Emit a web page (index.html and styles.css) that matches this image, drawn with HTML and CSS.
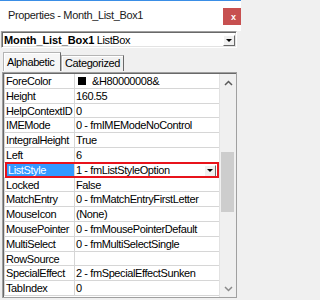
FILE: index.html
```html
<!DOCTYPE html>
<html>
<head>
<meta charset="utf-8">
<link rel="stylesheet" href="styles.css">
</head>
<body>
<div class="window">
  <div class="titlebar">
    <span class="title">Properties - Month_List_Box1</span>
    <span class="close">x</span>
  </div>
  <div class="combo">
    <span class="combo-text"><b>Month_List_Box1</b> ListBox</span>
    <span class="btn"><span class="tri"></span></span>
  </div>
  <div class="tabs">
    <div class="tab active">Alphabetic</div>
    <div class="tab">Categorized</div>
  </div>
  <div class="grid">
    <div class="rows">
      <div class="row"><div class="name">ForeColor</div><div class="val"><span class="swatch"></span>&amp;H80000008&amp;</div></div>
      <div class="row"><div class="name">Height</div><div class="val">160.55</div></div>
      <div class="row"><div class="name">HelpContextID</div><div class="val">0</div></div>
      <div class="row"><div class="name">IMEMode</div><div class="val">0 - fmIMEModeNoControl</div></div>
      <div class="row"><div class="name">IntegralHeight</div><div class="val">True</div></div>
      <div class="row"><div class="name">Left</div><div class="val">6</div></div>
      <div class="row selected"><div class="name">ListStyle</div><div class="val">1 - fmListStyleOption<span class="btn cell-btn"><span class="tri"></span></span></div><div class="mark"></div></div>
      <div class="row"><div class="name">Locked</div><div class="val">False</div></div>
      <div class="row"><div class="name">MatchEntry</div><div class="val">0 - fmMatchEntryFirstLetter</div></div>
      <div class="row"><div class="name">MouseIcon</div><div class="val">(None)</div></div>
      <div class="row"><div class="name">MousePointer</div><div class="val">0 - fmMousePointerDefault</div></div>
      <div class="row"><div class="name">MultiSelect</div><div class="val">0 - fmMultiSelectSingle</div></div>
      <div class="row"><div class="name">RowSource</div><div class="val"></div></div>
      <div class="row"><div class="name">SpecialEffect</div><div class="val">2 - fmSpecialEffectSunken</div></div>
      <div class="row"><div class="name">TabIndex</div><div class="val">0</div></div>
    </div>
    <div class="scrollbar">
      <div class="arrow"><svg width="9" height="6" viewBox="0 0 9 6"><polyline points="1,5 4.5,1.5 8,5" fill="none" stroke="#5a5a5a" stroke-width="1.5"/></svg></div>
      <div class="track"><div class="thumb"></div></div>
      <div class="arrow"><svg width="9" height="6" viewBox="0 0 9 6"><polyline points="1,1 4.5,4.5 8,1" fill="none" stroke="#8a8a8a" stroke-width="1.5"/></svg></div>
    </div>
  </div>
</div>
</body>
</html>
```
FILE: styles.css
```css
html, body {
  margin: 0;
  padding: 0;
}
body {
  width: 241px;
  height: 300px;
  overflow: hidden;
  background: #f0f0f0;
  font-family: "Liberation Sans", Arial, sans-serif;
  font-size: 11px;
  letter-spacing: -0.4px;
  color: #000;
}
.window {
  border-top: 1px solid #3a8ee6;
}
.titlebar {
  height: 30px;
  background: #fff;
  display: flex;
  align-items: flex-start;
}
.title {
  padding-left: 8px;
  padding-top: 8px;
  line-height: 12px;
  letter-spacing: -0.35px;
  color: #1a1a1a;
}
.close {
  margin-left: auto;
  margin-top: 7px;
  width: 18px;
  height: 17px;
  background: #c75050;
  color: #fff;
  font-size: 9px;
  font-weight: bold;
  letter-spacing: 0;
  display: flex;
  align-items: center;
  justify-content: center;
  padding-left: 3px;
  box-sizing: border-box;
}
.combo {
  margin-left: 1px;
  width: 236px;
  height: 17px;
  box-sizing: border-box;
  background: #fff;
  border: 1px solid;
  border-color: #a0a0a0 #fff #fff #a0a0a0;
  box-shadow: inset 1px 1px 0 #696969, inset -1px -1px 0 #e3e3e3;
  display: flex;
  align-items: center;
  padding-left: 2px;
  padding-right: 1px;
}
.combo-text {
  padding-top: 1px;
  line-height: 13px;
}
.combo-text b {
  letter-spacing: -0.1px;
}
.btn {
  margin-left: auto;
  width: 12px;
  height: 11px;
  box-sizing: border-box;
  background: #f0f0f0;
  border: 1px solid;
  border-color: #fff #696969 #696969 #fff;
  display: flex;
  align-items: center;
  justify-content: center;
  margin-top: 1px;
}
.tri {
  width: 0;
  height: 0;
  border-left: 3px solid transparent;
  border-right: 3px solid transparent;
  border-top: 3px solid #000;
}
.tabs {
  margin-top: 4px;
  height: 19px;
  display: flex;
  align-items: flex-end;
  padding-left: 3px;
}
.tab {
  box-sizing: border-box;
  border: 1px solid #b4b4b4;
  border-bottom: none;
  border-right-color: #696969;
  box-shadow: inset 1px 1px 0 #fff;
  line-height: 14px;
  height: 16px;
  width: 63px;
  padding-left: 3px;
}
.tab.active {
  height: 19px;
  width: 58px;
  padding-top: 2px;
  background: #f6f6f6;
}
.grid {
  margin-top: 1px;
  margin-left: 2px;
  width: 235px;
  height: 226px;
  box-sizing: border-box;
  border: 1px solid #a0a0a0;
  padding: 1px 0 0 1px;
  box-shadow: inset 1px 1px 0 #696969;
  display: flex;
}
.rows {
  width: 215px;
  background: #fff;
}
.row {
  position: relative;
  height: 14.8px;
  box-sizing: border-box;
  border-bottom: 1px solid #d6d6d6;
  display: flex;
  line-height: 13.8px;
}
.name {
  width: 71px;
  box-sizing: border-box;
  border-left: 1px solid #d6d6d6;
  border-right: 1px solid #d6d6d6;
  padding-left: 1px;
  padding-top: 1px;
  flex: none;
  white-space: nowrap;
}
.val {
  flex: 1;
  padding-left: 1px;
  padding-top: 1px;
  display: flex;
  align-items: flex-start;
  white-space: nowrap;
}
.swatch {
  width: 8px;
  height: 8px;
  background: #000;
  margin: 2px 6px 0 2px;
  flex: none;
}
.selected .name {
  background: #3399ff;
  color: #fff;
  border-left-color: #fff;
  margin-left: 2px;
  width: 69px;
}
.cell-btn {
  height: 12px;
  margin-right: 3px;
  margin-top: 1px;
}
.mark {
  position: absolute;
  left: 1px;
  right: 0;
  top: -1px;
  bottom: -1px;
  border: 2px solid #e8131b;
}
.scrollbar {
  width: 17px;
  box-sizing: border-box;
  border-left: 1px solid #e2e2e2;
  background: #f0f0f0;
  display: flex;
  flex-direction: column;
}
.arrow {
  height: 17px;
  display: flex;
  align-items: center;
  justify-content: center;
  flex: none;
}
.track {
  flex: 1;
}
.thumb {
  margin: 61px 2px 0 1px;
  height: 60px;
  background: #cdcdcd;
}
```
